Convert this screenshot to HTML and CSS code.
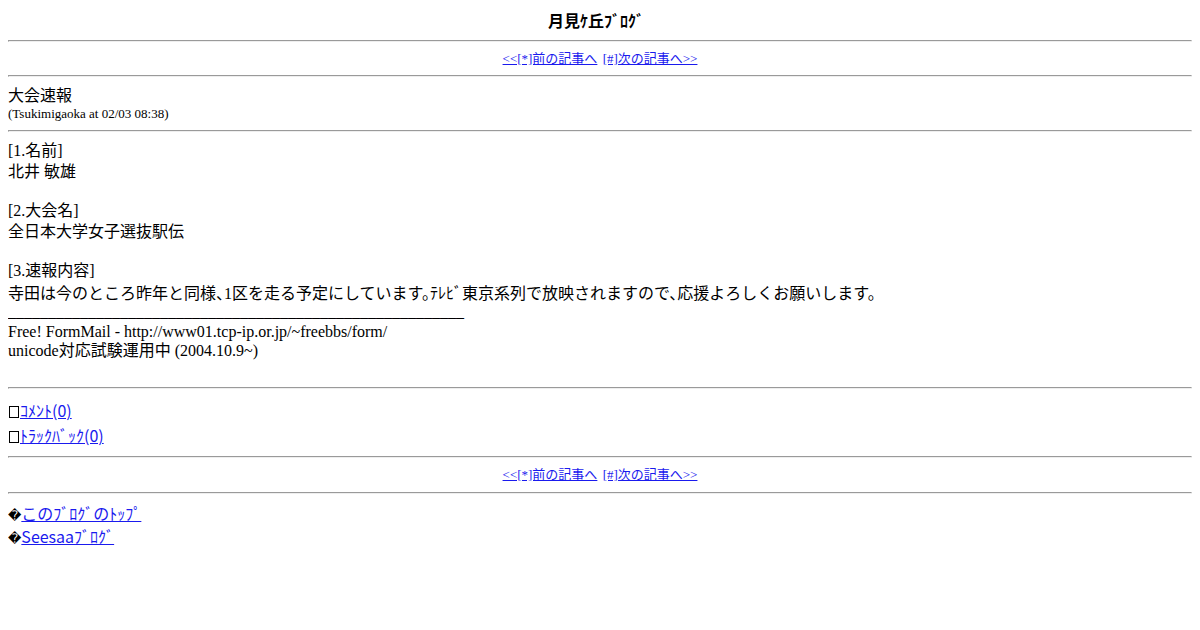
FILE: index.html
```html
<!DOCTYPE html>
<html lang="ja">
<head>
    <meta charset="UTF-8">
    <title>月見ｹ丘ﾌﾞﾛｸﾞ</title>
    <link rel="stylesheet" href="styles.css">
</head>
<body>
    <div class="blog-title">月見ｹ丘ﾌﾞﾛｸﾞ</div>
    <hr>
    <div class="pager">
        <a href="#">&lt;&lt;[*]前の記事へ</a> <a class="next" href="#">[#]次の記事へ&gt;&gt;</a>
    </div>
    <hr>
    <div class="entry-title">大会速報</div>
    <div class="entry-meta">(Tsukimigaoka at 02/03 08:38)</div>
    <hr>
    <div class="entry-body">
        <div class="field">
            <div class="line">[1.名前]</div>
            <div class="line">北井 敏雄</div>
        </div>
        <div class="field">
            <div class="line">[2.大会名]</div>
            <div class="line">全日本大学女子選抜駅伝</div>
        </div>
        <div class="field">
            <div class="line">[3.速報内容]</div>
            <div class="line lead">寺田は今のところ昨年と同様、1区を走る予定にしています。ﾃﾚﾋﾞ東京系列で放映されますので、応援よろしくお願いします。</div>
        </div>
        <div class="rule">_________________________________________________________</div>
        <div class="footer-note">
            <div class="note-line">Free! FormMail - http://www01.tcp-ip.or.jp/~freebbs/form/</div>
            <div class="note-line">unicode対応試験運用中 (2004.10.9~)</div>
        </div>
    </div>
    <hr>
    <div class="entry-links">
        <div class="entry-link"><span class="tofu"></span><a href="#">ｺﾒﾝﾄ(0)</a></div>
        <div class="entry-link"><span class="tofu"></span><a href="#">ﾄﾗｯｸﾊﾞｯｸ(0)</a></div>
    </div>
    <hr>
    <div class="pager pager-bottom">
        <a href="#">&lt;&lt;[*]前の記事へ</a> <a class="next" href="#">[#]次の記事へ&gt;&gt;</a>
    </div>
    <hr>
    <div class="site-links">
        <div class="site-link">&#xFFFD;<a href="#">このﾌﾞﾛｸﾞのﾄｯﾌﾟ</a></div>
        <div class="site-link">&#xFFFD;<a href="#">Seesaaﾌﾞﾛｸﾞ</a></div>
    </div>
</body>
</html>
```

FILE: styles.css
```css
body {
    margin: 8px;
    font-family: "Liberation Serif", "Noto Sans CJK JP", serif;
    font-size: 16px;
    color: #000000;
    background-color: #FFFFFF;
}

a {
    color: #1a1aee;
}

hr {
    margin: 8px 0;
}

.blog-title {
    text-align: center;
    font-family: "Noto Sans CJK JP", sans-serif;
    font-weight: bold;
    line-height: 24px;
    height: 24px;
    padding-right: 8px;
}

.pager {
    text-align: center;
    font-size: 13px;
    line-height: 17px;
    height: 17px;
}

.pager-bottom {
    line-height: 18px;
    height: 18px;
}

.pager .next {
    margin-left: 2px;
}

.entry-title {
    line-height: 21px;
    height: 21px;
}

.entry-meta {
    font-size: 13px;
    line-height: 16px;
    height: 16px;
}

.field {
    margin-bottom: 18px;
}

.field:nth-child(3) {
    margin-bottom: 0;
}

.line {
    line-height: 21px;
    height: 21px;
}

.lead {
    line-height: 25px;
    height: 25px;
    white-space: nowrap;
    font-feature-settings: "halt";
}

.rule {
    line-height: 12px;
    height: 12px;
    margin-bottom: 4px;
}

.footer-note {
    padding-bottom: 19px;
}

.note-line {
    line-height: 19px;
    height: 19px;
}

.entry-links {
    padding-top: 1px;
}

.entry-link {
    line-height: 25px;
    height: 25px;
}

.entry-link a {
    font-family: "Noto Sans CJK JP", sans-serif;
}

.tofu {
    display: inline-block;
    width: 8px;
    height: 10px;
    border: 1px solid #000000;
    margin: 0 1px 0 1px;
    vertical-align: -1px;
}

.site-link {
    font-family: "DejaVu Sans", "Noto Sans CJK JP", sans-serif;
    font-size: 13px;
    line-height: 23px;
    height: 23px;
}

.site-link a {
    font-family: "Noto Sans CJK JP", sans-serif;
    font-size: 16px;
}
```
